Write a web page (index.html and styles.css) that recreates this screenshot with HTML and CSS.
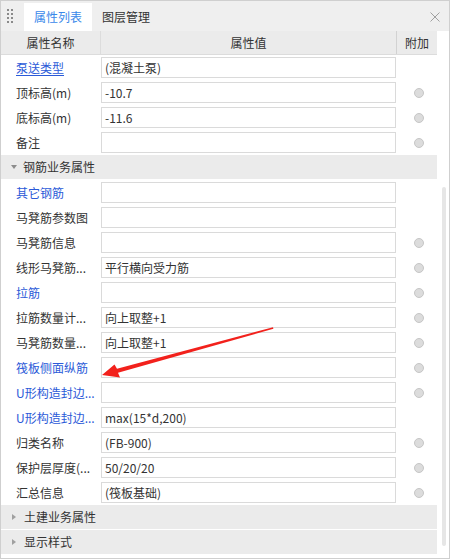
FILE: index.html
```html
<!DOCTYPE html>
<html lang="zh">
<head>
<meta charset="utf-8">
<link rel="stylesheet" href="styles.css">
</head>
<body>
<div class="panel">
  <div class="tabbar">
    <div class="grip"><span></span><span></span><span></span><span></span><span></span><span></span><span></span><span></span></div>
    <div class="tab active">属性列表</div>
    <div class="tab">图层管理</div>
    <div class="spacer"></div>
    <svg class="close" width="10" height="10" viewBox="0 0 10 10"><path d="M0.5 0.5 L9.5 9.5 M9.5 0.5 L0.5 9.5" stroke="#a0a0a0" stroke-width="1" fill="none"/></svg>
  </div>
  <div class="body">
    <div class="grid">
      <div class="hrow">
        <div class="hcell hname">属性名称</div>
        <div class="hcell hval">属性值</div>
        <div class="hcell hadd">附加</div>
      </div>
      <div class="row"><div class="name link u">泵送类型</div><div class="val"><div class="box">(混凝土泵)</div></div><div class="add"></div></div>
      <div class="row"><div class="name">顶标高(m)</div><div class="val"><div class="box">-10.7</div></div><div class="add"><i class="radio"></i></div></div>
      <div class="row"><div class="name">底标高(m)</div><div class="val"><div class="box">-11.6</div></div><div class="add"><i class="radio"></i></div></div>
      <div class="row"><div class="name">备注</div><div class="val"><div class="box"></div></div><div class="add"><i class="radio"></i></div></div>
      <div class="section"><i class="tri down"></i>钢筋业务属性</div>
      <div class="row"><div class="name link">其它钢筋</div><div class="val"><div class="box"></div></div><div class="add"></div></div>
      <div class="row"><div class="name">马凳筋参数图</div><div class="val"><div class="box"></div></div><div class="add"></div></div>
      <div class="row"><div class="name">马凳筋信息</div><div class="val"><div class="box"></div></div><div class="add"><i class="radio"></i></div></div>
      <div class="row"><div class="name">线形马凳筋...</div><div class="val"><div class="box">平行横向受力筋</div></div><div class="add"><i class="radio"></i></div></div>
      <div class="row"><div class="name link">拉筋</div><div class="val"><div class="box"></div></div><div class="add"><i class="radio"></i></div></div>
      <div class="row"><div class="name">拉筋数量计...</div><div class="val"><div class="box">向上取整+1</div></div><div class="add"><i class="radio"></i></div></div>
      <div class="row"><div class="name">马凳筋数量...</div><div class="val"><div class="box">向上取整+1</div></div><div class="add"><i class="radio"></i></div></div>
      <div class="row"><div class="name link">筏板侧面纵筋</div><div class="val"><div class="box"></div></div><div class="add"><i class="radio"></i></div></div>
      <div class="row"><div class="name link">U形构造封边...</div><div class="val"><div class="box"></div></div><div class="add"><i class="radio"></i></div></div>
      <div class="row"><div class="name link">U形构造封边...</div><div class="val"><div class="box">max(15*d,200)</div></div><div class="add"></div></div>
      <div class="row"><div class="name">归类名称</div><div class="val"><div class="box">(FB-900)</div></div><div class="add"><i class="radio"></i></div></div>
      <div class="row"><div class="name">保护层厚度(...</div><div class="val"><div class="box">50/20/20</div></div><div class="add"><i class="radio"></i></div></div>
      <div class="row"><div class="name">汇总信息</div><div class="val"><div class="box">(筏板基础)</div></div><div class="add"><i class="radio"></i></div></div>
      <div class="section"><i class="tri right"></i>土建业务属性</div>
      <div class="section"><i class="tri right"></i>显示样式</div>
    </div>
    <div class="scroll"><div class="thumb"></div></div>
  </div>
  <svg class="arrow" width="451" height="559" viewBox="0 0 451 559">
    <polygon points="102,375 114.5,364.5 117,368.8 273,327.3 273.4,328.7 118,372.8 120,377.5" fill="#f2211c"/>
  </svg>
</div>
</body>
</html>
```

FILE: styles.css
```css
* { box-sizing: border-box; }
html, body { margin: 0; padding: 0; background: #fff; }
body {
  font-family: "Noto Sans CJK SC", "Microsoft YaHei", sans-serif;
  font-size: 12px;
  color: #333;
}
.panel {
  position: relative;
  width: 450px;
  height: 559px;
  border: 1px solid #cfcfcf;
  background: #fff;
  overflow: hidden;
}
.tabbar {
  height: 30px;
  background: #efefef;
  display: flex;
  align-items: flex-end;
}
.grip {
  width: 23px;
  height: 30px;
  padding: 8px 0 0 6px;
  display: grid;
  grid-template-columns: 2px 2px;
  grid-auto-rows: 2px;
  column-gap: 2px;
  row-gap: 2px;
  align-content: start;
}
.grip span { background: #8a8a8a; display: block; width: 2px; height: 2px; }
.tab {
  height: 28px;
  width: 68px;
  line-height: 28px;
  text-align: center;
  color: #333;
}
.tab.active { background: #fff; color: #3a88ea; }
.spacer { flex: 1; }
.close { align-self: center; margin-right: 9px; margin-top: 1px; }
.body { display: flex; }
.grid { width: 436px; }
.hrow {
  display: grid;
  grid-template-columns: 100px 296px 40px;
  height: 24px;
  background: #ebebeb;
  border-bottom: 1px solid #dcdcdc;
}
.hcell { line-height: 23px; text-align: center; }
.hname { border-right: 1px solid #dcdcdc; }
.hval { border-right: 1px solid #d2d2d2; }
.row {
  display: grid;
  grid-template-columns: 100px 296px 40px;
  height: 25px;
}
.name {
  padding-left: 15px;
  line-height: 25px;
  white-space: nowrap;
  overflow: hidden;
}
.link { color: #2b5ad8; }
.u { text-decoration: underline; text-underline-offset: 2px; }
.val { padding-top: 2px; }
.box {
  width: 295px;
  height: 21px;
  border: 1px solid #dadada;
  padding-left: 3px;
  line-height: 19px;
  white-space: nowrap;
}
.add { display: flex; align-items: center; padding-left: 17px; }
.radio {
  display: block;
  width: 10px;
  height: 10px;
  border-radius: 50%;
  background: #dcdcdc;
  border: 1px solid #c6c6c6;
}
.section {
  height: 25px;
  background: #ebebeb;
  border-bottom: 1px solid #fff;
  display: flex;
  align-items: center;
  padding-left: 10px;
  line-height: 24px;
}
.tri { display: block; width: 0; height: 0; margin-right: 6px; }
.tri.down {
  border-left: 3px solid transparent;
  border-right: 3px solid transparent;
  border-top: 4px solid #8c8c8c;
}
.tri.right {
  margin-left: 1px;
  margin-right: 8px;
  border-top: 3px solid transparent;
  border-bottom: 3px solid transparent;
  border-left: 4px solid #a0a0a0;
}
.scroll { flex: 1; padding-left: 5px; padding-top: 156px; }
.thumb { width: 4px; height: 359px; background: #e6e6e6; border-radius: 2px; }
.arrow { position: absolute; left: -1px; top: -1px; pointer-events: none; }
```
